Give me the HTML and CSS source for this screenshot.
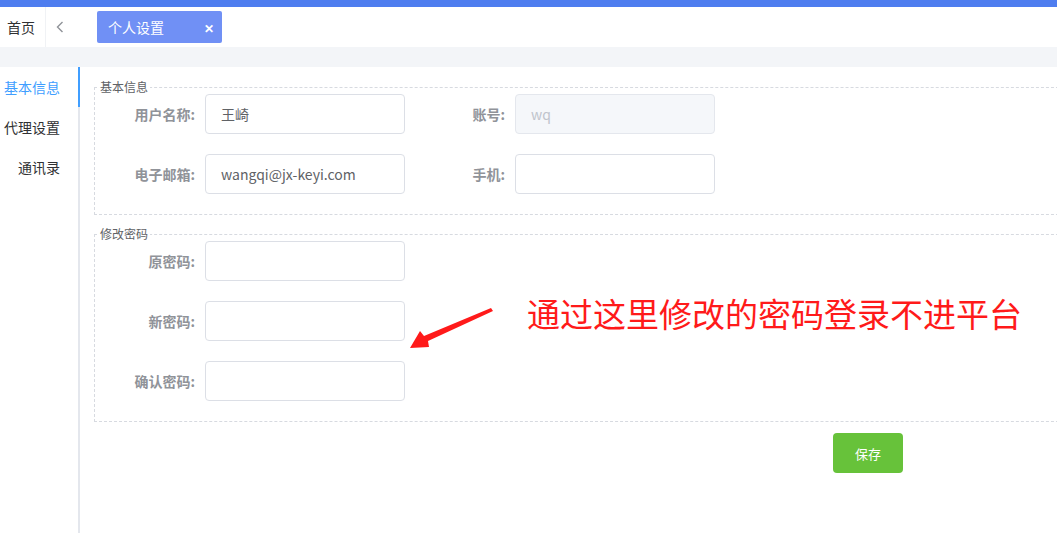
FILE: index.html
```html
<!DOCTYPE html>
<html lang="zh-CN">

<head>
    <meta charset="UTF-8">
    <meta name="viewport" content="width=device-width, initial-scale=1.0">
    <title>个人设置</title>
    <link rel="stylesheet" href="styles.css">
</head>

<body>
    <div class="topbar"></div>

    <div class="tabs-bar">
        <div class="home-tab">首页</div>
        <div class="tab-prev">
            <svg width="8" height="12" viewBox="0 0 8 12"><path d="M6.5 1 L1.5 6 L6.5 11" fill="none" stroke="#909399" stroke-width="1.4"/></svg>
        </div>
        <div class="tab active">
            <span>个人设置</span>
            <span class="tab-close">✕</span>
        </div>
    </div>

    <div class="gap-band"></div>

    <div class="main">
        <div class="sidebar">
            <div class="side-item active">基本信息</div>
            <div class="side-item">代理设置</div>
            <div class="side-item">通讯录</div>
        </div>

        <div class="content">
            <fieldset class="group">
                <legend>基本信息</legend>
                <div class="form-row">
                    <div class="form-item">
                        <label>用户名称:</label>
                        <input type="text" value="王崎">
                    </div>
                    <div class="form-item">
                        <label>账号:</label>
                        <input type="text" value="wq" disabled>
                    </div>
                </div>
                <div class="form-row">
                    <div class="form-item">
                        <label>电子邮箱:</label>
                        <input type="text" value="wangqi@jx-keyi.com">
                    </div>
                    <div class="form-item">
                        <label>手机:</label>
                        <input type="text">
                    </div>
                </div>
            </fieldset>

            <fieldset class="group">
                <legend>修改密码</legend>
                <div class="form-row">
                    <div class="form-item">
                        <label>原密码:</label>
                        <input type="password">
                    </div>
                </div>
                <div class="form-row">
                    <div class="form-item">
                        <label>新密码:</label>
                        <input type="password">
                    </div>
                </div>
                <div class="form-row">
                    <div class="form-item">
                        <label>确认密码:</label>
                        <input type="password">
                    </div>
                </div>
            </fieldset>

            <div class="actions">
                <button class="btn-save">保存</button>
            </div>

            <!-- red note drawn over the form -->
            <svg class="note-arrow" width="90" height="46" viewBox="0 0 90 46">
                <polygon points="81,0 83,3 18,33 19,39 0,40 10,23 14,28" fill="#ff1a1a"/>
            </svg>
            <div class="note-text">通过这里修改的密码登录不进平台</div>
        </div>
    </div>
</body>

</html>
```

FILE: styles.css
```css
* {
    box-sizing: border-box;
}

body {
    margin: 0;
    font-family: "Noto Sans CJK SC", "Noto Sans", sans-serif;
    font-size: 14px;
    color: #606266;
    background: #fff;
    height: 533px;
    overflow: hidden;
}

.topbar {
    height: 7px;
    background-color: #4e7def;
}

.tabs-bar {
    height: 40px;
    display: flex;
    align-items: center;
}

.home-tab {
    width: 46px;
    height: 40px;
    line-height: 40px;
    padding-left: 7px;
    color: #303133;
    border-right: 1px solid #f0f2f5;
}

.tab-prev {
    width: 30px;
    display: flex;
    align-items: center;
    padding-left: 10px;
}

.tab {
    margin-left: 21px;
    width: 125px;
    height: 32px;
    border-radius: 2px;
    display: flex;
    align-items: center;
    justify-content: space-between;
    padding: 0 8px 0 11px;
    color: #fff;
}

.tab.active {
    background-color: #7090f5;
}

.tab-close {
    font-size: 12px;
    font-weight: bold;
}

.gap-band {
    height: 20px;
    background-color: #f3f5f8;
}

.main {
    display: flex;
    height: 466px;
}

.sidebar {
    flex: none;
    width: 80px;
    border-right: 2px solid #e4e7ed;
}

.side-item {
    height: 40px;
    line-height: 40px;
    text-align: right;
    padding-right: 18px;
    color: #303133;
    position: relative;
    white-space: nowrap;
}

.side-item.active {
    color: #409eff;
}

.side-item.active::after {
    content: "";
    position: absolute;
    right: -2px;
    top: 0;
    width: 2px;
    height: 40px;
    background-color: #409eff;
}

.content {
    flex: 1;
    min-width: 0;
    overflow: hidden;
    padding: 13px 0 0 14px;
    position: relative;
}

.group {
    margin: 0 0 12px 0;
    padding: 0;
    border: 1px dashed #d7dae0;
    border-right: none;
    width: 980px;
}

.group legend {
    margin-left: 3px;
    padding: 0 2px;
    font-size: 12px;
    line-height: 14px;
    color: #606266;
}

.form-row {
    display: flex;
    margin-bottom: 20px;
}

.form-item {
    display: flex;
    align-items: center;
}

.form-item label {
    width: 110px;
    text-align: right;
    padding-right: 10px;
    font-size: 14px;
    font-weight: bold;
    color: #909399;
}

.form-item input {
    width: 200px;
    height: 40px;
    border: 1px solid #dcdfe6;
    border-radius: 4px;
    padding: 0 15px;
    font-family: inherit;
    font-size: 14px;
    color: #606266;
    outline: none;
    background: #fff;
}

.form-item input:disabled {
    background-color: #f5f7fa;
    border-color: #e4e7ed;
    color: #c0c4cc;
}

.actions {
    margin-top: -1px;
    padding-left: 739px;
}

.btn-save {
    width: 70px;
    height: 40px;
    border: none;
    border-radius: 4px;
    background-color: #67c23a;
    color: #fff;
    font-family: inherit;
    font-size: 13px;
}

.note-arrow {
    position: absolute;
    left: 330px;
    top: 241px;
}

.note-text {
    position: absolute;
    left: 447px;
    top: 226px;
    font-size: 33px;
    line-height: 40px;
    color: #ff1a1a;
    white-space: nowrap;
}
```
